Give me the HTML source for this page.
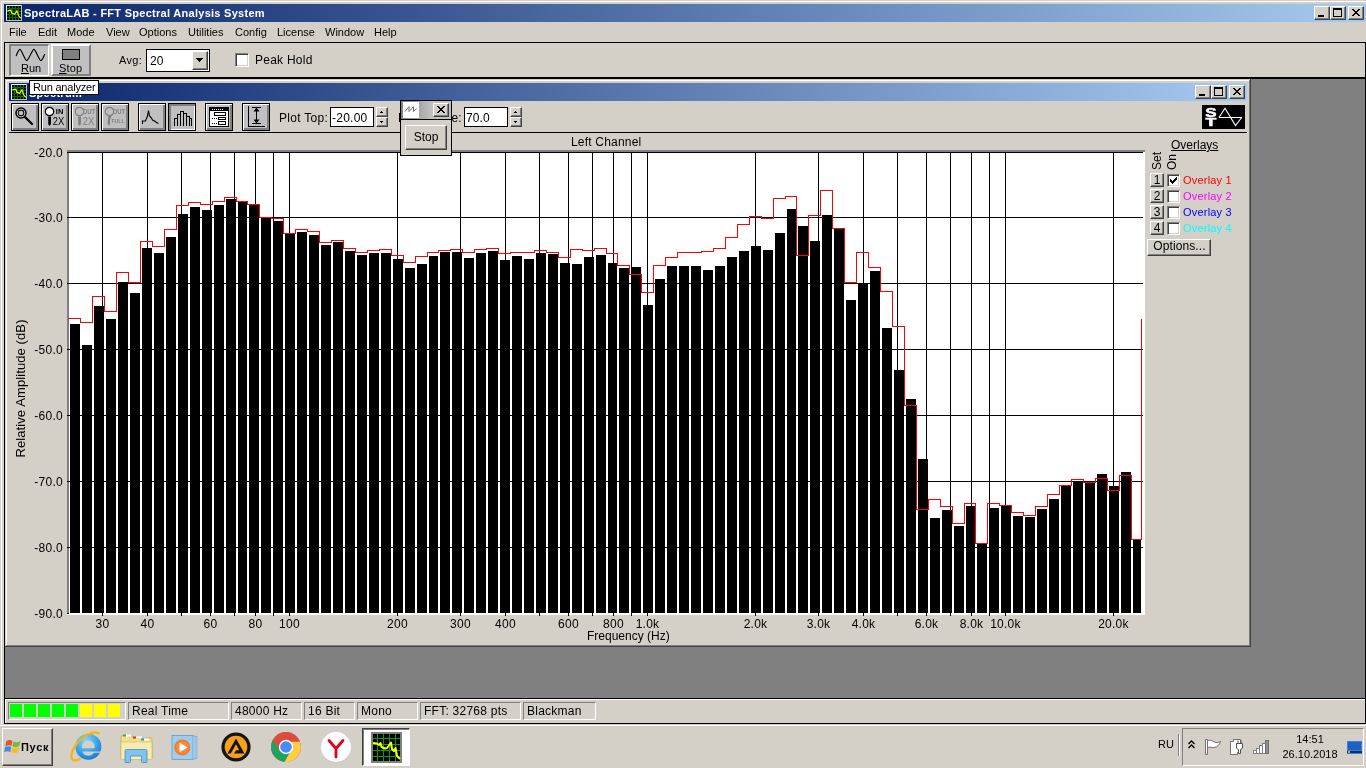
<!DOCTYPE html>
<html lang="en"><head><meta charset="utf-8"><title>SpectraLAB - FFT Spectral Analysis System</title>
<style>
*{box-sizing:border-box;margin:0;padding:0}
html,body{width:1366px;height:768px;overflow:hidden;background:#d4d0c8}
body{position:relative;will-change:transform;font-family:"Liberation Sans",sans-serif;font-size:12px;line-height:14px;color:#000}
.abs{position:absolute;display:block}
.t12{font-size:12px;line-height:14px;white-space:nowrap}
.t11{font-size:11px;line-height:13px;white-space:nowrap}
.t13{font-size:13px;line-height:15px;white-space:nowrap}
.k{background:#000}.w{background:#fff}.g{background:#808080}.dg{background:#404040}.f{background:#d4d0c8}
.grad{background:linear-gradient(to right,#0a246a 0%,#a6caf0 100%)}
.btn{background:#d4d0c8;border:1px solid;border-color:#fff #404040 #404040 #fff;box-shadow:inset -1px -1px 0 #808080,inset 1px 1px 0 #d4d0c8}
.sunk{border:1px solid;border-color:#808080 #fff #fff #808080}
.sunk2{border:1px solid;border-color:#808080 #fff #fff #808080;box-shadow:inset 1px 1px 0 #404040,inset -1px -1px 0 #d4d0c8;background:#fff}
.tb{background:#c0c0c0;border:1px solid #000;box-shadow:inset 1px 1px 0 #fff,inset -1px -1px 0 #808080,inset -2px -2px 0 #808080}
.tbp{background:#c0c0c0;border:1px solid #000;box-shadow:inset 1px 1px 0 #808080,inset 2px 2px 0 #808080,inset -1px -1px 0 #fff}
.b{font-weight:bold}
.u{text-decoration:underline}
svg{overflow:visible}

.runb{background:#c0c0c0;border-style:solid;border-width:2px 1px 1px 2px;border-color:#808080 #fff #fff #808080}
.stopb{background:#c0c0c0;border:2px solid;border-color:#fff #808080 #808080 #fff}
.inp{background:#fff;border:1px solid #000}
.spin{background:#d4d0c8;border:1px solid;border-color:#fff #404040 #404040 #fff;box-shadow:inset -1px -1px 0 #808080}
</style></head>
<body>
<div class="abs w" style="left:1px;top:1px;width:1365px;height:1px"></div>
<div class="abs w" style="left:1px;top:1px;width:1px;height:723px"></div>
<div class="abs grad" style="left:4px;top:4px;width:1362px;height:18px"></div>
<svg class="abs" style="left:6px;top:5px" width="16" height="16" viewBox="0 0 16 16" shape-rendering="crispEdges"><rect width="16" height="16" fill="#c0c0c0"/><rect width="15" height="1" fill="#f0f0f0"/><rect width="1" height="15" fill="#f0f0f0"/><rect x="1" y="1" width="14" height="14" fill="#000"/><path fill="#007000" d="M3 1h1v14h-1zM1 3h14v1h-14zM6 1h1v14h-1zM1 6h14v1h-14zM9 1h1v14h-1zM1 9h14v1h-14zM12 1h1v14h-1zM1 12h14v1h-14z"/><path shape-rendering="geometricPrecision" fill="none" stroke="#ff0" stroke-width="1.1" d="M1.300 5.800L5 5.200L5.600 8L8.600 9.300L11 5.800L12.400 10.200L14.700 13.400"/></svg>
<div class="abs t11 b" style="left:24px;top:7px;color:#fff;letter-spacing:0.28px">SpectraLAB - FFT Spectral Analysis System</div>
<div class="abs btn" style="left:1314px;top:6px;width:16px;height:14px"><div class="abs k" style="left:3px;top:8px;width:6px;height:2px"></div></div>
<div class="abs btn" style="left:1330px;top:6px;width:16px;height:14px"><div class="abs" style="left:2px;top:1px;width:9px;height:9px;border:1px solid #000;border-top-width:2px"></div></div>
<div class="abs btn" style="left:1348px;top:6px;width:16px;height:14px"><svg class="abs" style="left:3px;top:2px" width="8" height="7" viewBox="0 0 8 7" shape-rendering="crispEdges"><path fill="#000" d="M0 0h2v1h-2zM6 0h2v1h-2zM1 1h2v1h-2zM5 1h2v1h-2zM2 2h4v1h-4zM3 3h2v1h-2zM2 4h4v1h-4zM1 5h2v1h-2zM5 5h2v1h-2zM0 6h2v1h-2zM6 6h2v1h-2z"/></svg></div>
<div class="abs t11" style="left:9px;top:26px;">File</div>
<div class="abs t11" style="left:38px;top:26px;">Edit</div>
<div class="abs t11" style="left:67px;top:26px;">Mode</div>
<div class="abs t11" style="left:106px;top:26px;">View</div>
<div class="abs t11" style="left:139px;top:26px;">Options</div>
<div class="abs t11" style="left:188px;top:26px;">Utilities</div>
<div class="abs t11" style="left:235px;top:26px;">Config</div>
<div class="abs t11" style="left:277px;top:26px;">License</div>
<div class="abs t11" style="left:325px;top:26px;">Window</div>
<div class="abs t11" style="left:374px;top:26px;">Help</div>
<div class="abs k" style="left:4px;top:42px;width:1362px;height:1px"></div>
<div class="abs k" style="left:4px;top:77px;width:1362px;height:2px"></div>
<div class="abs k" style="left:4px;top:42px;width:1px;height:682px"></div>
<div class="abs k" style="left:1365px;top:42px;width:1px;height:682px"></div>
<div class="abs runb" style="left:9px;top:44px;width:40px;height:32px"></div>
<svg class="abs" style="left:9px;top:44px" width="40" height="32" viewBox="9 44 40 32"><path fill="none" stroke="#000" stroke-width="1.2" stroke-linecap="round" d="M16.3 55.6 C18 51 19 49.3 19.9 49.3 C21.5 49.3 25 60.6 26.8 60.6 C28.6 60.6 32.2 49.3 33.9 49.3 C35.6 49.3 39.2 60.6 40.9 60.6 C42 60.6 43.2 58 44.6 54.6"/></svg>
<div class="abs t11" style="left:21px;top:62px;"><span class="u">R</span>un</div>
<div class="abs stopb" style="left:51px;top:44px;width:40px;height:32px"></div>
<div class="abs" style="left:62px;top:49px;width:18px;height:11px;background:#808080;border:1px solid #000"></div>
<div class="abs t11" style="left:59px;top:62px;letter-spacing:0.2px"><span class="u">S</span>top</div>
<div class="abs t11" style="left:119px;top:54px;letter-spacing:0.3px">Avg:</div>
<div class="abs inp" style="left:146px;top:49px;width:64px;height:23px"></div>
<div class="abs t12" style="left:150px;top:54px;">20</div>
<div class="abs btn" style="left:192px;top:51px;width:16px;height:19px"><svg class="abs" style="left:3px;top:6px" width="7" height="4" viewBox="0 0 7 4" shape-rendering="crispEdges"><path d="M0 0h7v1h-7zM1 1h5v1h-5zM2 2h3v1h-3zM3 3h1v1h-1z"/></svg></div>
<div class="abs sunk2" style="left:235px;top:53px;width:14px;height:14px"></div>
<div class="abs t12" style="left:255px;top:53px;letter-spacing:0.25px">Peak Hold</div>
<div class="abs g" style="left:5px;top:79px;width:1360px;height:619px"></div>
<div class="abs k" style="left:4px;top:698px;width:1362px;height:1px"></div>
<div class="abs w" style="left:5px;top:699px;width:1360px;height:1px"></div>
<div class="abs w" style="left:5px;top:699px;width:1px;height:24px"></div>
<div class="abs k" style="left:4px;top:723px;width:1362px;height:1px"></div>
<div class="abs sunk" style="left:8px;top:702px;width:118px;height:18px"></div>
<div class="abs" style="left:10px;top:704px;width:12px;height:13px;background:#0f0"></div>
<div class="abs" style="left:24px;top:704px;width:12px;height:13px;background:#0f0"></div>
<div class="abs" style="left:38px;top:704px;width:12px;height:13px;background:#0f0"></div>
<div class="abs" style="left:52px;top:704px;width:12px;height:13px;background:#0f0"></div>
<div class="abs" style="left:66px;top:704px;width:12px;height:13px;background:#0f0"></div>
<div class="abs" style="left:80px;top:704px;width:12px;height:13px;background:#ff0"></div>
<div class="abs" style="left:94px;top:704px;width:12px;height:13px;background:#ff0"></div>
<div class="abs" style="left:108px;top:704px;width:12px;height:13px;background:#ff0"></div>
<div class="abs sunk t12" style="left:128px;top:702px;width:101px;height:18px;padding:1px 0 0 3px;letter-spacing:0.25px">Real Time</div>
<div class="abs sunk t12" style="left:231px;top:702px;width:71px;height:18px;padding:1px 0 0 3px;letter-spacing:0.25px">48000 Hz</div>
<div class="abs sunk t12" style="left:304px;top:702px;width:51px;height:18px;padding:1px 0 0 3px;letter-spacing:0.25px">16 Bit</div>
<div class="abs sunk t12" style="left:357px;top:702px;width:61px;height:18px;padding:1px 0 0 3px;letter-spacing:0.25px">Mono</div>
<div class="abs sunk t12" style="left:420px;top:702px;width:101px;height:18px;padding:1px 0 0 3px;letter-spacing:0.25px">FFT: 32768 pts</div>
<div class="abs sunk t12" style="left:523px;top:702px;width:73px;height:18px;padding:1px 0 0 3px;letter-spacing:0.25px">Blackman</div>
<div class="abs f" style="left:5px;top:79px;width:1246px;height:568px"></div>
<div class="abs dg" style="left:5px;top:646px;width:1246px;height:1px"></div>
<div class="abs dg" style="left:1250px;top:79px;width:1px;height:568px"></div>
<div class="abs g" style="left:6px;top:645px;width:1244px;height:1px"></div>
<div class="abs g" style="left:1249px;top:80px;width:1px;height:566px"></div>
<div class="abs w" style="left:6px;top:80px;width:1243px;height:1px"></div>
<div class="abs w" style="left:6px;top:80px;width:1px;height:565px"></div>
<div class="abs grad" style="left:9px;top:83px;width:1238px;height:18px"></div>
<svg class="abs" style="left:11px;top:84px" width="16" height="16" viewBox="0 0 16 16" shape-rendering="crispEdges"><rect width="16" height="16" fill="#c0c0c0"/><rect width="15" height="1" fill="#f0f0f0"/><rect width="1" height="15" fill="#f0f0f0"/><rect x="1" y="1" width="14" height="14" fill="#000"/><path fill="#007000" d="M3 1h1v14h-1zM1 3h14v1h-14zM6 1h1v14h-1zM1 6h14v1h-14zM9 1h1v14h-1zM1 9h14v1h-14zM12 1h1v14h-1zM1 12h14v1h-14z"/><path shape-rendering="geometricPrecision" fill="none" stroke="#ff0" stroke-width="1.1" d="M1.300 5.800L5 5.200L5.600 8L8.600 9.300L11 5.800L12.400 10.200L14.700 13.400"/></svg>
<div class="abs t11 b" style="left:29px;top:87px;color:#fff;letter-spacing:0.28px">Spectrum</div>
<div class="abs btn" style="left:1195px;top:85px;width:16px;height:14px"><div class="abs k" style="left:3px;top:8px;width:6px;height:2px"></div></div>
<div class="abs btn" style="left:1211px;top:85px;width:16px;height:14px"><div class="abs" style="left:2px;top:1px;width:9px;height:9px;border:1px solid #000;border-top-width:2px"></div></div>
<div class="abs btn" style="left:1229px;top:85px;width:16px;height:14px"><svg class="abs" style="left:3px;top:2px" width="8" height="7" viewBox="0 0 8 7" shape-rendering="crispEdges"><path fill="#000" d="M0 0h2v1h-2zM6 0h2v1h-2zM1 1h2v1h-2zM5 1h2v1h-2zM2 2h4v1h-4zM3 3h2v1h-2zM2 4h4v1h-4zM1 5h2v1h-2zM5 5h2v1h-2zM0 6h2v1h-2zM6 6h2v1h-2z"/></svg></div>
<div class="abs k" style="left:9px;top:132px;width:1238px;height:1px"></div>
<div class="abs t12" style="left:571px;top:135px;letter-spacing:0.2px">Left Channel</div>
<div class="abs t12" style="left:587px;top:629px;">Frequency (Hz)</div>
<div class="abs t13" style="left:-50px;top:381px;width:140px;text-align:center;letter-spacing:0.1px;transform:rotate(-90deg)">Relative Amplitude (dB)</div>
<svg class="abs" style="left:0;top:0" width="1366" height="768" viewBox="0 0 1366 768" shape-rendering="crispEdges">
<rect x="67" y="150" width="1078" height="465" fill="#808080"/>
<rect x="69" y="152" width="1076" height="463" fill="#fff"/>
<rect x="67" y="613" width="1078" height="2" fill="#fff"/>
<path fill="#000" d="M67 152h1076v1h-1076zM67 217h1076v1h-1076zM67 283h1076v1h-1076zM67 349h1076v1h-1076zM67 415h1076v1h-1076zM67 481h1076v1h-1076zM67 547h1076v1h-1076zM102 152h1v464h-1zM147 152h1v464h-1zM181 152h1v464h-1zM210 152h1v464h-1zM234 152h1v464h-1zM255 152h1v464h-1zM273 152h1v464h-1zM289 152h1v464h-1zM397 152h1v464h-1zM460 152h1v464h-1zM505 152h1v464h-1zM539 152h1v464h-1zM568 152h1v464h-1zM592 152h1v464h-1zM613 152h1v464h-1zM631 152h1v464h-1zM647 152h1v464h-1zM755 152h1v464h-1zM818 152h1v464h-1zM863 152h1v464h-1zM897 152h1v464h-1zM926 152h1v464h-1zM950 152h1v464h-1zM971 152h1v464h-1zM989 152h1v464h-1zM1005 152h1v464h-1zM1113 152h1v464h-1zM67 613h2v1h-2z"/>
<path fill="#000" d="M70 324h10v289h-10zM82 345h10v268h-10zM94 306h10v307h-10zM106 319h10v294h-10zM118 282h10v331h-10zM130 293h10v320h-10zM142 248h10v365h-10zM154 253h10v360h-10zM166 237h10v376h-10zM178 214h10v399h-10zM190 207h10v406h-10zM202 210h10v403h-10zM214 205h10v408h-10zM226 199h10v414h-10zM238 202h9v411h-9zM249 205h10v408h-10zM261 218h10v395h-10zM273 221h10v392h-10zM285 234h10v379h-10zM297 232h10v381h-10zM309 235h10v378h-10zM321 245h10v368h-10zM333 242h10v371h-10zM345 251h10v362h-10zM357 255h10v358h-10zM369 253h10v360h-10zM381 253h10v360h-10zM393 259h10v354h-10zM405 268h10v345h-10zM417 264h10v349h-10zM429 256h9v357h-9zM440 252h10v361h-10zM452 252h10v361h-10zM464 258h10v355h-10zM476 253h10v360h-10zM488 251h10v362h-10zM500 260h10v353h-10zM512 256h10v357h-10zM524 259h10v354h-10zM536 253h10v360h-10zM548 254h10v359h-10zM560 263h10v350h-10zM572 264h10v349h-10zM584 257h10v356h-10zM596 255h10v358h-10zM608 263h9v350h-9zM619 268h10v345h-10zM631 267h10v346h-10zM643 305h10v308h-10zM655 279h10v334h-10zM667 266h10v347h-10zM679 266h10v347h-10zM691 266h10v347h-10zM703 270h10v343h-10zM715 266h10v347h-10zM727 257h10v356h-10zM739 251h10v362h-10zM751 246h10v367h-10zM763 250h10v363h-10zM775 233h10v380h-10zM787 209h9v404h-9zM798 226h10v387h-10zM810 241h10v372h-10zM822 215h10v398h-10zM834 229h10v384h-10zM846 300h10v313h-10zM858 283h10v330h-10zM870 271h10v342h-10zM882 328h10v285h-10zM894 370h10v243h-10zM906 399h10v214h-10zM918 459h10v154h-10zM930 518h10v95h-10zM942 510h10v103h-10zM954 526h10v87h-10zM966 506h9v107h-9zM977 544h10v69h-10zM989 508h10v105h-10zM1001 506h10v107h-10zM1013 516h10v97h-10zM1025 517h10v96h-10zM1037 509h10v104h-10zM1049 499h10v114h-10zM1061 486h10v127h-10zM1073 481h10v132h-10zM1085 483h10v130h-10zM1097 474h10v139h-10zM1109 486h10v127h-10zM1121 472h10v141h-10zM1133 540h8v73h-8z"/>
<path fill="none" stroke="#f00" stroke-width="1" stroke-linejoin="miter" d="M68 318.5H80.5V322.5H92.5V296.5H104.5V311.5H116.5V272.5H128.5V282.5H140.5V241.5H152.5V246.5H164.5V229.5H176.5V205.5H188.5V202.5H200.5V204.5H212.5V201.5H224.5V197.5H236.5V201.5H247.5V204.5H259.5V217.5H271.5V218.5H283.5V233.5H295.5V229.5H307.5V231.5H319.5V242.5H331.5V240.5H343.5V248.5H355.5V252.5H367.5V250.5H379.5V249.5H391.5V255.5H403.5V262.5H415.5V256.5H427.5V252.5H438.5V250.5H450.5V249.5H462.5V252.5H474.5V249.5H486.5V248.5H498.5V253.5H510.5V252.5H522.5V252.5H534.5V250.5H546.5V252.5H558.5V257.5H570.5V249.5H582.5V250.5H594.5V248.5H606.5V253.5H617.5V265.5H629.5V274.5H641.5V292.5H653.5V265.5H665.5V257.5H677.5V252.5H689.5V252.5H701.5V251.5H713.5V248.5H725.5V237.5H737.5V224.5H749.5V216.5H761.5V218.5H773.5V198.5H785.5V196.5H796.5V255.5H808.5V215.5H820.5V190.5H832.5V228.5H844.5V282.5H856.5V252.5H868.5V267.5H880.5V291.5H892.5V326.5H904.5V405.5H916.5V509.5H928.5V499.5H940.5V506.5H952.5V523.5H964.5V503.5H975.5V543.5H987.5V503.5H999.5V505.5H1011.5V512.5H1023.5V515.5H1035.5V506.5H1047.5V494.5H1059.5V485.5H1071.5V479.5H1083.5V482.5H1095.5V478.5H1107.5V490.5H1119.5V475.5H1131.5V539.5H1141.5V319"/>
</svg>
<div class="abs t12" style="left:22px;top:146px;width:41px;text-align:right;letter-spacing:0.3px">-20.0</div>
<div class="abs t12" style="left:22px;top:211px;width:41px;text-align:right;letter-spacing:0.3px">-30.0</div>
<div class="abs t12" style="left:22px;top:277px;width:41px;text-align:right;letter-spacing:0.3px">-40.0</div>
<div class="abs t12" style="left:22px;top:343px;width:41px;text-align:right;letter-spacing:0.3px">-50.0</div>
<div class="abs t12" style="left:22px;top:409px;width:41px;text-align:right;letter-spacing:0.3px">-60.0</div>
<div class="abs t12" style="left:22px;top:475px;width:41px;text-align:right;letter-spacing:0.3px">-70.0</div>
<div class="abs t12" style="left:22px;top:541px;width:41px;text-align:right;letter-spacing:0.3px">-80.0</div>
<div class="abs t12" style="left:22px;top:607px;width:41px;text-align:right;letter-spacing:0.3px">-90.0</div>
<div class="abs t12" style="left:72px;top:617px;width:61px;text-align:center;letter-spacing:0.25px">30</div>
<div class="abs t12" style="left:117px;top:617px;width:61px;text-align:center;letter-spacing:0.25px">40</div>
<div class="abs t12" style="left:180px;top:617px;width:61px;text-align:center;letter-spacing:0.25px">60</div>
<div class="abs t12" style="left:225px;top:617px;width:61px;text-align:center;letter-spacing:0.25px">80</div>
<div class="abs t12" style="left:259px;top:617px;width:61px;text-align:center;letter-spacing:0.25px">100</div>
<div class="abs t12" style="left:367px;top:617px;width:61px;text-align:center;letter-spacing:0.25px">200</div>
<div class="abs t12" style="left:430px;top:617px;width:61px;text-align:center;letter-spacing:0.25px">300</div>
<div class="abs t12" style="left:475px;top:617px;width:61px;text-align:center;letter-spacing:0.25px">400</div>
<div class="abs t12" style="left:538px;top:617px;width:61px;text-align:center;letter-spacing:0.25px">600</div>
<div class="abs t12" style="left:583px;top:617px;width:61px;text-align:center;letter-spacing:0.25px">800</div>
<div class="abs t12" style="left:617px;top:617px;width:61px;text-align:center;letter-spacing:0.25px">1.0k</div>
<div class="abs t12" style="left:725px;top:617px;width:61px;text-align:center;letter-spacing:0.25px">2.0k</div>
<div class="abs t12" style="left:788px;top:617px;width:61px;text-align:center;letter-spacing:0.25px">3.0k</div>
<div class="abs t12" style="left:833px;top:617px;width:61px;text-align:center;letter-spacing:0.25px">4.0k</div>
<div class="abs t12" style="left:896px;top:617px;width:61px;text-align:center;letter-spacing:0.25px">6.0k</div>
<div class="abs t12" style="left:941px;top:617px;width:61px;text-align:center;letter-spacing:0.25px">8.0k</div>
<div class="abs t12" style="left:975px;top:617px;width:61px;text-align:center;letter-spacing:0.25px">10.0k</div>
<div class="abs t12" style="left:1083px;top:617px;width:61px;text-align:center;letter-spacing:0.25px">20.0k</div>
<div class="abs tb" style="left:11px;top:103px;width:28px;height:28px"><svg class="abs" style="left:-1px;top:-1px" width="28" height="28" viewBox="0 0 28 28"><circle cx="10" cy="10" r="5" fill="#fff" stroke="#000" stroke-width="1.5"/><circle cx="10" cy="10" r="2.900" fill="#c0c0c0" stroke="#000" stroke-width="1.100"/><path d="M14 14L21 21" stroke="#000" stroke-width="2.300" stroke-linecap="round"/></svg></div>
<div class="abs tb" style="left:41px;top:103px;width:28px;height:28px"><svg class="abs" style="left:-1px;top:-1px" width="28" height="28" viewBox="0 0 28 28"><circle cx="8.500" cy="8.500" r="4.200" fill="#fff" stroke="#000" stroke-width="1.200"/><path d="M7.200 13.500h2.800v7.500l-1.400 2l-1.400-2z" fill="#000"/><text x="14.8" y="11.200" font-family="Liberation Sans,sans-serif" font-weight="bold" font-size="7" textLength="7.5" lengthAdjust="spacingAndGlyphs" fill="#000">IN</text><text x="11.800" y="22.400" font-family="Liberation Sans,sans-serif" font-size="11" textLength="11.500" lengthAdjust="spacingAndGlyphs" fill="#000">2X</text></svg></div>
<div class="abs tb" style="left:71px;top:103px;width:28px;height:28px"><svg class="abs" style="left:-1px;top:-1px" width="28" height="28" viewBox="0 0 28 28"><circle cx="8.500" cy="8.500" r="4.200" fill="none" stroke="#808080" stroke-width="1.200"/><path d="M7.200 13.500h2.800v7.500l-1.400 2l-1.400-2z" fill="#808080"/><text x="11.7" y="11.200" font-family="Liberation Sans,sans-serif" font-weight="bold" font-size="7" textLength="12.4" lengthAdjust="spacingAndGlyphs" fill="#808080">OUT</text><text x="11.800" y="22.400" font-family="Liberation Sans,sans-serif" font-size="11" textLength="11.500" lengthAdjust="spacingAndGlyphs" fill="#808080">2X</text></svg></div>
<div class="abs tb" style="left:101px;top:103px;width:28px;height:28px"><svg class="abs" style="left:-1px;top:-1px" width="28" height="28" viewBox="0 0 28 28"><circle cx="8.500" cy="8.500" r="4.200" fill="none" stroke="#808080" stroke-width="1.200"/><path d="M7.500 13h3l-1.500 4v4l-1 2l-1.500-3z" fill="#808080"/><text x="11.700" y="11.200" font-family="Liberation Sans,sans-serif" font-weight="bold" font-size="7" textLength="12.400" lengthAdjust="spacingAndGlyphs" fill="#808080">OUT</text><text x="10.500" y="19.600" font-family="Liberation Sans,sans-serif" font-weight="bold" font-size="6" textLength="13" lengthAdjust="spacingAndGlyphs" fill="#808080">FULL</text></svg></div>
<div class="abs tb" style="left:138px;top:103px;width:28px;height:28px"><svg class="abs" style="left:-1px;top:-1px" width="28" height="28" viewBox="0 0 28 28"><path fill="none" stroke="#000" stroke-width="1.1" d="M4.5 21v-3h3l2-5l1-5.500l1 5.5l2 2l1 2l2 1l2 1.500l2 1"/></svg></div>
<div class="abs tbp" style="left:168px;top:103px;width:28px;height:28px"><svg class="abs" style="left:-1px;top:-1px" width="28" height="28" viewBox="0 0 28 28"><path shape-rendering="crispEdges" fill="none" stroke="#000" stroke-width="1" d="M6.500 23v-8h2.500v8M9 15v-4h3v12M12 11v-3h3v15M15 8.500h0M15 10h3v13M18 13h3v10M21 15h2.500v8"/></svg></div>
<div class="abs tb" style="left:205px;top:103px;width:28px;height:28px"><svg class="abs" style="left:-1px;top:-1px" width="28" height="28" viewBox="0 0 28 28"><rect x="4.500" y="4.500" width="19" height="19" fill="#fff" stroke="#000" shape-rendering="crispEdges"/><rect x="5" y="5" width="18" height="3" fill="#000" shape-rendering="crispEdges"/><path stroke="#fff" stroke-width="1" stroke-dasharray="1 1" d="M7 6.500h12" shape-rendering="crispEdges"/><rect x="9.500" y="9.500" width="11" height="3" fill="#fff" stroke="#000" shape-rendering="crispEdges"/><rect x="13.500" y="14.500" width="7" height="2" fill="#fff" stroke="#000" shape-rendering="crispEdges"/><rect x="13.500" y="18.500" width="7" height="3" fill="#fff" stroke="#000" shape-rendering="crispEdges"/><path stroke="#000" stroke-width="1" stroke-dasharray="1 1" d="M7 15.500h5M7 20.500h5" shape-rendering="crispEdges"/></svg></div>
<div class="abs tb" style="left:242px;top:103px;width:28px;height:28px"><svg class="abs" style="left:-1px;top:-1px" width="28" height="28" viewBox="0 0 28 28"><path shape-rendering="crispEdges" fill="none" stroke="#000" stroke-width="1" d="M6.500 3v20.500h16M10 4.500h9M10 20.500h9M14.500 5v15"/><path fill="#000" d="M14.500 4.500l-3 4h6zM14.500 20.500l-3-4h6z"/></svg></div>
<div class="abs t12" style="left:279px;top:111px;letter-spacing:0.3px">Plot Top:</div>
<div class="abs inp t12" style="left:330px;top:107px;width:44px;height:20px;padding:3px 0 0 1px;letter-spacing:0.25px">-20.00</div>
<div class="abs spin" style="left:376px;top:107px;width:12px;height:10px"><svg class="abs" style="left:3px;top:3px" width="3" height="2" viewBox="0 0 3 2" shape-rendering="crispEdges"><path d="M1 0h1v1h-1zM0 1h3v1h-3z"/></svg></div><div class="abs spin" style="left:376px;top:117px;width:12px;height:10px"><svg class="abs" style="left:3px;top:3px" width="3" height="2" viewBox="0 0 3 2" shape-rendering="crispEdges"><path d="M0 0h3v1h-3zM1 1h1v1h-1z"/></svg></div>
<div class="abs t12" style="left:398px;top:111px;letter-spacing:0.1px">Plot Range:</div>
<div class="abs inp t12" style="left:464px;top:107px;width:44px;height:20px;padding:3px 0 0 1px;letter-spacing:0.1px">70.0</div>
<div class="abs spin" style="left:510px;top:107px;width:12px;height:10px"><svg class="abs" style="left:3px;top:3px" width="3" height="2" viewBox="0 0 3 2" shape-rendering="crispEdges"><path d="M1 0h1v1h-1zM0 1h3v1h-3z"/></svg></div><div class="abs spin" style="left:510px;top:117px;width:12px;height:10px"><svg class="abs" style="left:3px;top:3px" width="3" height="2" viewBox="0 0 3 2" shape-rendering="crispEdges"><path d="M0 0h3v1h-3zM1 1h1v1h-1z"/></svg></div>
<div class="abs k" style="left:1202px;top:105px;width:43px;height:24px"></div>
<svg class="abs" style="left:1202px;top:105px" width="43" height="24" viewBox="1202 105 43 24"><text x="1205.200" y="116.700" font-family="Liberation Sans,sans-serif" font-weight="bold" font-size="12.500" textLength="11.300" lengthAdjust="spacingAndGlyphs" fill="#fff" stroke="#fff" stroke-width="0.500">S</text><text x="1205.500" y="126.200" font-family="Liberation Sans,sans-serif" font-weight="bold" font-size="11.300" textLength="10.800" lengthAdjust="spacingAndGlyphs" fill="#fff" stroke="#fff" stroke-width="0.500">T</text></svg>
<svg class="abs" style="left:1202px;top:105px" width="43" height="24" viewBox="1202 105 43 24"><path fill="none" stroke="#fff" stroke-width="1.1" d="M1219 117.500h23M1219 117.500L1225 108.300L1235.500 125.600L1241.700 117.500"/></svg>
<div class="abs t12 u" style="left:1171px;top:138px;">Overlays</div>
<div class="abs t12" style="left:1141px;top:154px;width:32px;text-align:center;transform:rotate(-90deg)">Set</div>
<div class="abs t12" style="left:1156px;top:155px;width:32px;text-align:center;transform:rotate(-90deg)">On</div>
<div class="abs btn t12" style="left:1150px;top:173px;width:14px;height:14px;text-align:center;line-height:13px">1</div>
<div class="abs sunk2" style="left:1167px;top:174px;width:13px;height:13px"><svg class="abs" style="left:1px;top:1px" width="9" height="9" viewBox="0 0 9 9" shape-rendering="crispEdges"><path d="M1 3h1v3h-1zM2 4h1v3h-1zM3 5h1v3h-1zM4 4h1v3h-1zM5 3h1v3h-1zM6 2h1v3h-1zM7 1h1v3h-1z"/></svg></div>
<div class="abs t11" style="left:1183px;top:174px;color:#f00;letter-spacing:0.2px">Overlay 1</div>
<div class="abs btn t12" style="left:1150px;top:189px;width:14px;height:14px;text-align:center;line-height:13px">2</div>
<div class="abs sunk2" style="left:1167px;top:190px;width:13px;height:13px"></div>
<div class="abs t11" style="left:1183px;top:190px;color:#f0f;letter-spacing:0.2px">Overlay 2</div>
<div class="abs btn t12" style="left:1150px;top:205px;width:14px;height:14px;text-align:center;line-height:13px">3</div>
<div class="abs sunk2" style="left:1167px;top:206px;width:13px;height:13px"></div>
<div class="abs t11" style="left:1183px;top:206px;color:#00f;letter-spacing:0.2px">Overlay 3</div>
<div class="abs btn t12" style="left:1150px;top:221px;width:14px;height:14px;text-align:center;line-height:13px">4</div>
<div class="abs sunk2" style="left:1167px;top:222px;width:13px;height:13px"></div>
<div class="abs t11" style="left:1183px;top:222px;color:#0ff;letter-spacing:0.2px">Overlay 4</div>
<div class="abs btn t12" style="left:1147px;top:239px;width:64px;height:17px;text-align:center;line-height:13px;padding-left:1px;letter-spacing:0.1px">Options...</div>
<div class="abs f" style="left:400px;top:100px;width:52px;height:56px;border:1px solid #000"></div>
<div class="abs" style="left:401px;top:101px;width:50px;height:18px;background:linear-gradient(to right,#808080,#c0c0c0 60%,#c0c0c0)"></div>
<div class="abs k" style="left:401px;top:119px;width:50px;height:1px"></div>
<div class="abs w" style="left:403px;top:102px;width:16px;height:16px"><svg class="abs" style="left:0;top:0" width="16" height="16" viewBox="0 0 16 16"><path fill="none" stroke="#707070" stroke-width="1" d="M2 9.500L6 4.700V9.500L10.500 4.700V9.500L13.500 6.300"/></svg></div>
<div class="abs btn" style="left:433px;top:103px;width:16px;height:14px"><svg class="abs" style="left:3px;top:2px" width="8" height="7" viewBox="0 0 8 7" shape-rendering="crispEdges"><path fill="#000" d="M0 0h2v1h-2zM6 0h2v1h-2zM1 1h2v1h-2zM5 1h2v1h-2zM2 2h4v1h-4zM3 3h2v1h-2zM2 4h4v1h-4zM1 5h2v1h-2zM5 5h2v1h-2zM0 6h2v1h-2zM6 6h2v1h-2z"/></svg></div>
<div class="abs btn t12" style="left:405px;top:125px;width:42px;height:25px;text-align:center;line-height:23px">Stop</div>
<div class="abs t11" style="left:29px;top:80px;width:70px;height:15px;background:#fff;border:1px solid #000;padding:0 0 0 3px;line-height:13px;letter-spacing:-0.2px">Run analyzer</div>
<div class="abs w" style="left:0px;top:725px;width:1366px;height:1px"></div>
<div class="abs btn" style="left:2px;top:728px;width:51px;height:38px"></div>
<svg class="abs" style="left:4px;top:738px" width="17" height="17" viewBox="-0.5 1.500 15.500 13.500"><path fill="#e8542a" d="M1.500 3.500C3.500 2 5.500 2 7.200 3.200L6.300 7.800C4.600 6.800 2.800 6.800 0.700 8.200z"/><path fill="#7cb83a" d="M8 3.500C10 4.800 12 4.600 14.500 3.200L13.500 7.900C11.500 9.200 9.300 9.300 7.200 8.100z"/><path fill="#3b8ede" d="M0.500 9C2.500 7.600 4.400 7.700 6.100 8.800L5.200 13.300C3.500 12.200 1.700 12.300 -0.300 13.600z"/><path fill="#f7bb2e" d="M7 9C9 10.200 11 10.100 13.300 8.800L12.400 13.300C10.200 14.700 8.200 14.600 6.100 13.500z"/></svg>
<div class="abs t11 b" style="left:21px;top:741px;letter-spacing:0.7px">Пуск</div>
<svg class="abs" style="left:70px;top:730px" width="32" height="32" viewBox="0 0 32 32"><defs><radialGradient id="ieg" cx="0.4" cy="0.3" r="0.8"><stop offset="0" stop-color="#8ad8fa"/><stop offset="0.6" stop-color="#2f9be3"/><stop offset="1" stop-color="#1670c4"/></radialGradient><clipPath id="iec"><circle cx="18.400" cy="16.800" r="13"/></clipPath></defs><g clip-path="url(#iec)"><path fill="url(#ieg)" fill-rule="evenodd" d="M5 3h27v27h-27zM18.400 10.500a6.300 6.600 0 0 0-6.300 7.700h12.600a6.300 6.600 0 0 0-6.300-7.700zM12.300 21.500a6.300 5.500 0 0 0 11.600 1.300h8.500v-1.300z"/></g><path fill="none" stroke="#f6b511" stroke-width="2.300" stroke-linecap="round" d="M28.500 3.200C24 0.800 13.500 4.500 6 14.500C1 21.500 0.300 27.500 2.500 29.500C4.200 31 7 30.500 9.500 29.300"/></svg>
<svg class="abs" style="left:120px;top:733px" width="33" height="30" viewBox="0 0 33 30"><path fill="#f3dd8d" stroke="#c9a94a" stroke-width="0.8" d="M1 4.500q0-2 2-2h8l2 2.500h18q1 0 1 1.500v18.500q0 1-1 1h-29q-1 0-1-1z"/><rect x="3" y="1.500" width="3" height="2" fill="#2fb34a"/><rect x="6" y="1.500" width="5" height="2" fill="#fff"/><rect x="13" y="3.500" width="3" height="2" fill="#d8352a"/><rect x="16" y="3.500" width="6" height="2" fill="#fff"/><rect x="21" y="5.500" width="3" height="2" fill="#2e8ee6"/><rect x="24" y="5.500" width="5" height="2" fill="#fff"/><path fill="#f9eab0" stroke="#d3b75b" stroke-width="0.600" d="M1 9h31v16.500q0 1-1 1h-29q-1 0-1-1z"/><path fill="#7fc4ee" stroke="#3a8ecb" stroke-width="0.800" d="M5 18q0-1.500 1.500-1.500h19q1.500 0 1.500 1.500v10.500q0 1-1 1h-3.500q-1 0-1-1v-5.500h-11v5.500q0 1-1 1h-3.500q-1 0-1-1z"/></svg>
<svg class="abs" style="left:171px;top:735px" width="30" height="26" viewBox="0 0 30 26"><rect x="5" y="1.500" width="21" height="22" fill="#a9cfee" stroke="#6ea3d0" stroke-width="0.600"/><rect x="3" y="1" width="21" height="23" fill="#b9dcf5" stroke="#6ea3d0" stroke-width="0.600"/><rect x="1" y="0.500" width="21" height="24" fill="#9fcdf0" stroke="#5c97c9" stroke-width="0.700"/><circle cx="11.300" cy="12.400" r="8" fill="#f47a1f"/><circle cx="11.300" cy="12.400" r="6.500" fill="#f9893a"/><path fill="#fff" d="M8.500 7.500l8 4.900l-8 4.900z"/></svg>
<svg class="abs" style="left:221px;top:732px" width="30" height="30" viewBox="0 0 30 30"><circle cx="15" cy="15" r="14.600" fill="#141414"/><circle cx="15" cy="15" r="11.300" fill="#f7a01d"/><path fill="#141414" d="M15 6.500L23.500 21.500H13l2.200-3.300h3L15 12.300L9.800 21.500H6.500z"/></svg>
<svg class="abs" style="left:271px;top:732px" width="30" height="30" viewBox="0 0 30 30"><circle cx="15" cy="15" r="15" fill="#dd4b3e"/><path fill="#1da462" d="M2 7.500A15 15 0 0 0 13.500 29.900L20 18.500L15 15L9 18.500z"/><path fill="#ffce44" d="M13.500 29.900A15 15 0 0 0 28.800 9.500H15L21 15L20 18.500z"/><path fill="#dd4b3e" d="M2 7.500A15 15 0 0 1 28.800 9.500H15L9 15v3.500z"/><circle cx="15" cy="15" r="7.200" fill="#fff"/><circle cx="15" cy="15" r="5.800" fill="#4a8af4"/></svg>
<svg class="abs" style="left:321px;top:732px" width="30" height="31" viewBox="0 0 30 31"><circle cx="15" cy="15.600" r="15" fill="#c9c5bd"/><circle cx="15" cy="15" r="15" fill="#fff"/><path fill="none" stroke="#e1001a" stroke-width="2.800" stroke-linecap="round" d="M8 8.500L15 16.500L22 8.500M15 16.500V25"/></svg>
<div class="abs" style="left:362px;top:728px;width:48px;height:38px;background:#fff;border:1px solid;border-color:#404040 #fff #fff #404040;box-shadow:inset 1px 1px 0 #808080"></div>
<div class="abs g" style="left:371px;top:732px;width:31px;height:31px"></div>
<svg class="abs" style="left:373px;top:734px" width="27" height="27" viewBox="0 0 27 27" shape-rendering="crispEdges"><rect width="27" height="27" fill="#000"/><path fill="#00a000" d="M4 0h1v27h-1zM10 0h1v27h-1zM16 0h1v27h-1zM22 0h1v27h-1zM0 4h27v1h-27zM0 10h27v1h-27zM0 16h27v1h-27zM0 22h27v1h-27z"/><path shape-rendering="geometricPrecision" fill="none" stroke="#ff0" stroke-width="2" stroke-linejoin="round" d="M0 9L4 9.500L6 11L7.500 9L8.500 13L12 14.500L14 14L17 10L18 8.500L19 15L21 17L22.500 14L24 22L27 25"/></svg>
<div class="abs t11" style="left:1158px;top:738px;">RU</div>
<div class="abs g" style="left:1178px;top:734px;width:1px;height:22px"></div>
<div class="abs w" style="left:1179px;top:734px;width:1px;height:22px"></div>
<div class="abs sunk" style="left:1182px;top:728px;width:182px;height:38px"></div>
<svg class="abs" style="left:1188px;top:740px" width="7" height="9" viewBox="0 0 7 9"><path fill="none" stroke="#000" stroke-width="1.300" d="M0.500 4L3.500 1L6.500 4M0.500 8L3.500 5L6.500 8"/></svg>
<svg class="abs" style="left:1204px;top:738px" width="18" height="18" viewBox="0 0 18 18"><path fill="#fff" stroke="#707070" stroke-width="1" d="M1.500 1.500h2v15h-2z"/><path fill="#fff" stroke="#707070" stroke-width="1" d="M3.500 2.500c3-1 5 0.500 7 1.500s4 0.500 6-0.500c-1 3-3 5.500-6 6s-4-1-7 0z"/></svg>
<svg class="abs" style="left:1228px;top:738px" width="18" height="18" viewBox="0 0 18 18"><path fill="#fff" stroke="#707070" stroke-width="1" d="M2.500 3.500h3v-2h7v13h-3v2h-7z"/><path fill="#fff" stroke="#505050" stroke-width="1" d="M8.500 5.500h6v3.500c0 1.500-1 2.500-2 2.500v4h-2v-4c-1 0-2-1-2-2.500z"/><path stroke="#505050" stroke-width="1" d="M10 2.500v3M13 2.500v3"/></svg>
<svg class="abs" style="left:1253px;top:740px" width="17" height="14" viewBox="0 0 17 14" shape-rendering="crispEdges"><path fill="#fff" stroke="#808080" d="M0.500 10.500h3v3h-3zM3.500 8.500h3v5h-3zM6.500 5.500h3v8h-3zM9.500 3.500h3v10h-3z"/><path fill="#909090" stroke="#707070" d="M12.500 0.500h3v13h-3z"/></svg>
<div class="abs t11" style="left:1282px;top:733px;width:56px;text-align:center">14:51</div>
<div class="abs t11" style="left:1282px;top:748px;width:56px;text-align:center">26.10.2018</div>
<svg class="abs" style="left:1347px;top:741px" width="15" height="13" viewBox="0 0 15 13" shape-rendering="crispEdges"><rect width="15" height="13" fill="#3d7fd6"/><rect x="1" y="1" width="13" height="8" fill="#1f5fc0"/><rect x="0" y="10" width="15" height="2" fill="#16305e"/><rect x="1" y="10" width="2" height="2" fill="#e8a020"/></svg>
</body></html>
